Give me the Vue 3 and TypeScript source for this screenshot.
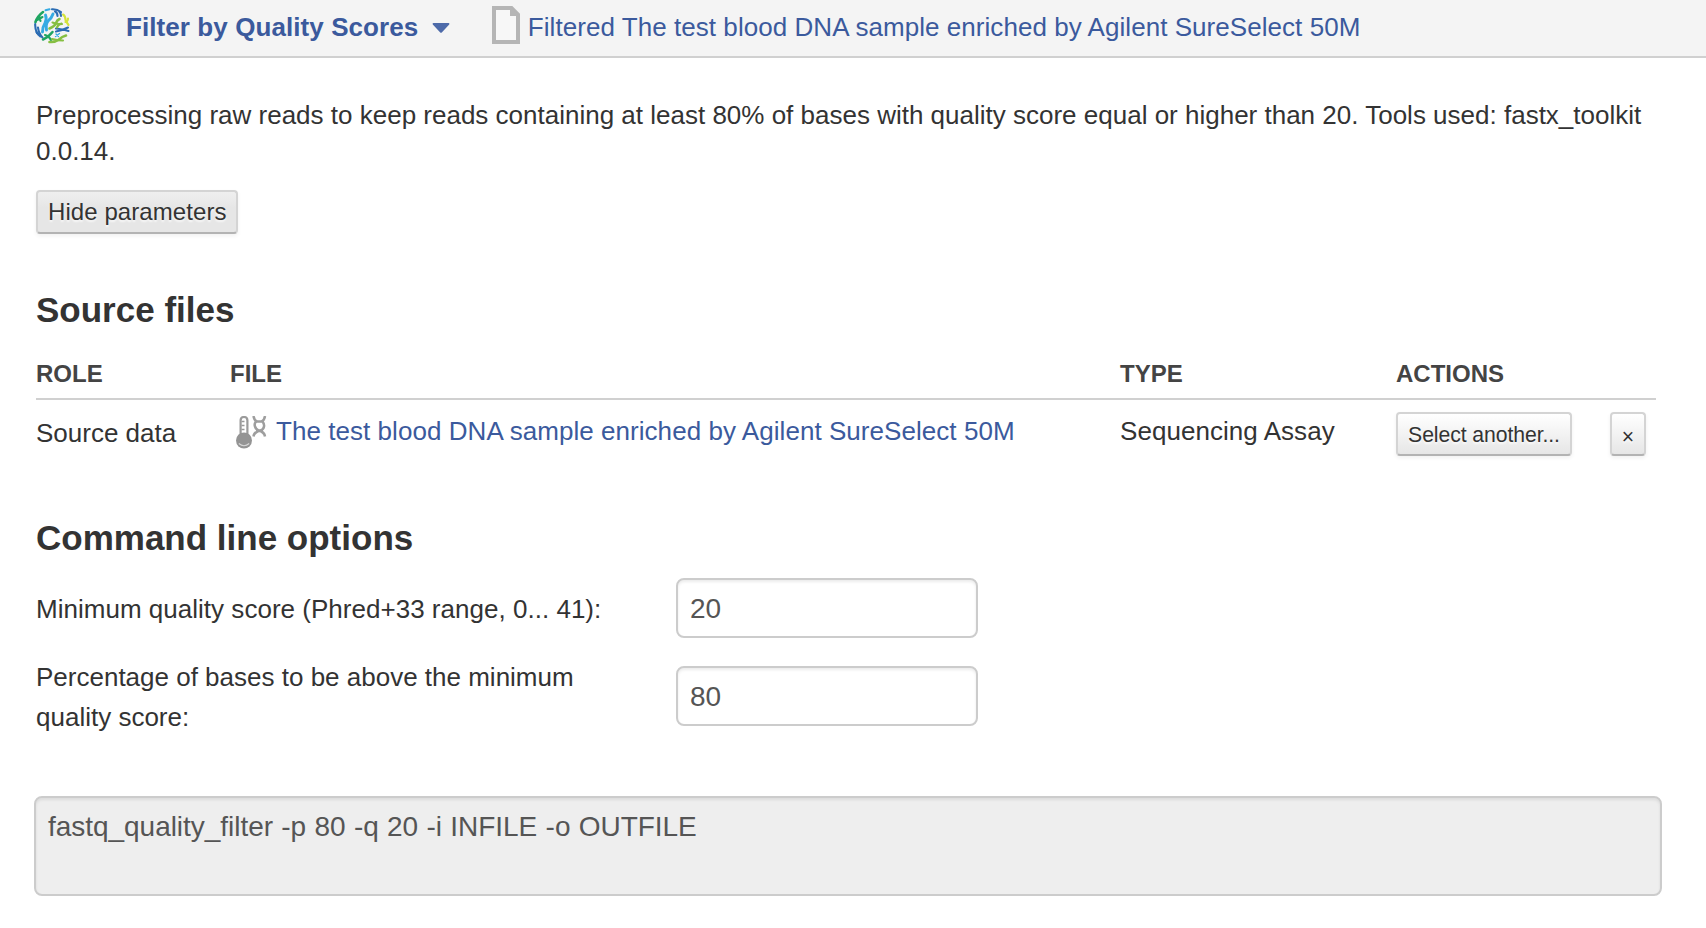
<script setup lang="ts">
import { computed, ref } from 'vue'

interface SourceFile {
  role: string
  name: string
  type: string
}

const files: SourceFile[] = [
  {
    role: 'Source data',
    name: 'The test blood DNA sample enriched by Agilent SureSelect 50M',
    type: 'Sequencing Assay',
  },
]

const minScore = ref('20')
const percentage = ref('80')
const command = computed(
  () => `fastq_quality_filter -p ${percentage.value} -q ${minScore.value} -i INFILE -o OUTFILE`,
)
</script>

<template>
  <div class="page">
    <header class="bar">
      <svg class="logo" viewBox="0 0 36 36" fill="none" stroke-linecap="round" stroke-width="2.1">
        <g stroke="#d3e33c">
          <path d="M29 6.500 Q31.500 8 31.500 12 Q33 15 34.500 17" />
          <path d="M34 10.500 Q34 13 31.500 14" />
        </g>
        <g stroke="#2b6cb3">
          <path d="M18 1.300 Q23 1 27 4" />
          <path d="M21 3.500 Q23.500 4.500 23.500 8 M25.500 4 Q27 5 27 8" />
          <path d="M1.200 16 Q1 21 3 25" />
          <path d="M4 19.500 Q4.500 25 8.500 29.500 M2.500 24 Q4 27 6.500 28.500" />
          <path d="M22 20.500 Q28 21 34.500 23 M22 23.500 Q28 22.500 34 19.500" />
        </g>
        <g stroke="#1fa561">
          <path d="M1.500 14 Q3.500 8 9 4" stroke-width="2.600" />
          <path d="M5.500 9 L6.500 13 M3 12 L8.500 9" />
          <path d="M9 31.500 Q14 29.500 18.500 24" stroke-width="2.500" />
          <path d="M11 27 Q15 28 17 32" />
        </g>
        <g stroke="#35abe3">
          <path d="M11.500 7 Q13 11 11 15 Q8.500 19 8.500 24" stroke-width="2.900" />
          <path d="M19 6 Q17.500 10.500 14 13 Q11.500 16 12.500 22" stroke-width="2.900" />
          <path d="M11.500 2.300 L15.500 1.300" />
          <path d="M21.500 28.500 L25.500 25.500 M22 26 L24.500 28.500" stroke-width="1.300" />
        </g>
        <g stroke="#86bf42">
          <path d="M15.500 20.500 Q20.500 18.500 22 15 Q23 12 25.500 11" stroke-width="2.600" />
          <path d="M18.500 14.500 Q23 16.500 28 16 M23 19.500 Q23.500 17 27.500 15.500" />
          <path d="M15.500 34 Q21 34.500 25 31.500 Q28 28.500 32 27.500" stroke-width="2.600" />
          <path d="M18 31 Q23 32.500 29 32.500" />
        </g>
      </svg>
      <a class="app-name">Filter by Quality Scores</a>
      <svg class="caret" viewBox="0 0 18 10"><path d="M1.500 0 H16.500 Q18 .5 17 1.700 L10 9.300 Q9 10.300 8 9.300 L1 1.700 Q0 .5 1.500 0Z" fill="#4d6aa9" /></svg>
      <svg class="doc" viewBox="0 0 28 38">
        <path d="M2 2 H19.500 L26 8.500 V36 H2 Z" fill="#f7f7f7" stroke="#b5b5b5" stroke-width="4" />
        <path d="M18 2 V10 H27 L20 2Z" fill="#b5b5b5" />
      </svg>
      <a class="file-name">Filtered The test blood DNA sample enriched by Agilent SureSelect 50M</a>
    </header>

    <main class="content">
      <p class="description">
        Preprocessing raw reads to keep reads containing at least 80% of bases with quality score
        equal or higher than 20. Tools used: fastx_toolkit 0.0.14.
      </p>
      <button class="btn pressed">Hide parameters</button>

      <h2 class="sources-title">Source files</h2>
      <section class="table">
        <div class="row head">
          <span>ROLE</span><span>FILE</span><span>TYPE</span><span>ACTIONS</span>
        </div>
        <div v-for="file in files" :key="file.name" class="row body">
          <span class="role">{{ file.role }}</span>
          <span class="file">
            <svg class="assay" viewBox="0 0 32 33">
              <path d="M4.600 19 V4.500 Q4.600 1 8 1 Q11.400 1 11.400 4.500 V19" fill="#fff" stroke="#9b9b9b" stroke-width="2.200" />
              <circle cx="8" cy="24.500" r="8" fill="#949494" />
              <path d="M2.800 27.500 Q8 32 13.200 27.500" fill="none" stroke="#d8d8d8" stroke-width="1.100" />
              <path d="M5.500 5.500 H8.500 M5.500 9.500 H8.500 M5.500 13.500 H8.500" stroke="#999" stroke-width="1.500" />
              <g fill="none" stroke="#9e9e9e" stroke-width="2.500">
                <path d="M17.500 0 Q18 4 21 5.500 M29 0 Q28.500 4 25.500 5.500" />
                <path d="M20 5.500 H26.500 Q28.500 8 28 10.500 Q27.500 13.500 24.500 14.500 Q18 16 17.500 20.500" />
                <path d="M20 5.500 Q18 8 19 10.500 Q20 13.500 22.500 14.500 Q28.500 16 29 20.500" />
                <path d="M20 14.700 H27" stroke-width="2" />
              </g>
            </svg>
            <a>{{ file.name }}</a>
          </span>
          <span class="type">{{ file.type }}</span>
          <span class="actions">
            <button class="btn small">Select another...</button>
            <button class="btn small remove">×</button>
          </span>
        </div>
      </section>

      <h2 class="options-title">Command line options</h2>
      <div class="option first">
        <label for="score">Minimum quality score (Phred+33 range, 0... 41):</label>
        <input id="score" v-model="minScore" type="text" />
      </div>
      <div class="option second">
        <label for="percent">Percentage of bases to be above the minimum quality score:</label>
        <input id="percent" v-model="percentage" type="text" />
      </div>
      <div class="command">{{ command }}</div>
    </main>
  </div>
</template>

<style>
body {
  margin: 0;
  background: #fff;
}
</style>

<style scoped>
.page {
  min-height: 928px;
  font: 26px/36px 'Liberation Sans', Arial, sans-serif;
  color: #333;
}
.page * {
  box-sizing: border-box;
}
a {
  color: #3b5a9d;
  letter-spacing: 0.05px;
  white-space: nowrap;
}
.bar {
  display: flex;
  align-items: center;
  height: 58px;
  padding: 0 0 2px 34px;
  background: #f4f4f4;
  border-bottom: 2px solid #d0d0d0;
}
.logo {
  width: 36px;
  height: 36px;
  margin-bottom: 2px;
}
.app-name {
  margin-left: 56px;
  font-weight: bold;
  letter-spacing: 0.08px;
}
.caret {
  width: 18px;
  height: 10px;
  margin: 2px 0 0 14px;
}
.doc {
  width: 28px;
  height: 38px;
  margin: 0 8px 4px 41.5px;
}
.content {
  padding: 39px 44px 0 36px;
}
.description {
  margin: 0 0 21px;
}
.btn {
  display: block;
  height: 44px;
  padding: 0 10px;
  font: 24px/40px 'Liberation Sans', Arial, sans-serif;
  color: #333;
  text-shadow: 0 2px 2px rgba(255, 255, 255, 0.75);
  white-space: nowrap;
  background: linear-gradient(#fff, #e6e6e6);
  border: 2px solid #d4d4d4;
  border-bottom-color: #b3b3b3;
  border-radius: 4px;
  box-shadow: 0 2px 4px rgba(0, 0, 0, 0.06);
}
.btn.pressed {
  width: 202px;
  letter-spacing: 0.08px;
  text-align: left;
  background: linear-gradient(#efefef, #e6e6e6 40%);
}
h2 {
  font-size: 35px;
  line-height: 40px;
  font-weight: bold;
}
.sources-title {
  margin: 56px 0 26px;
}
.row {
  display: grid;
  grid-template-columns: 194px 890px 276px 1fr;
  width: 1620px;
}
.head {
  height: 44px;
  font-size: 24px;
  font-weight: bold;
  color: #444;
  border-bottom: 2px solid #d0d0d0;
}
.body {
  height: 56px;
  padding-top: 12px;
}
.role {
  padding-top: 3px;
}
.file {
  display: flex;
  align-items: flex-start;
  padding: 1px 0 0 6px;
}
.assay {
  width: 32px;
  height: 33px;
  margin: 3px 8px 0 0;
}
.type {
  padding-top: 1px;
  letter-spacing: 0.05px;
}
.actions {
  display: flex;
  justify-content: space-between;
  padding-right: 10px;
}
.btn.small {
  width: 176px;
  padding: 1px 0 0;
  font-size: 21.2px;
  letter-spacing: -0.08px;
}
.btn.small.remove {
  width: 36px;
  padding-top: 3px;
}
.options-title {
  margin: 62px 0 20px;
}
.option {
  display: grid;
  grid-template-columns: 640px 302px;
  align-items: start;
}
.option label {
  width: 560px;
  line-height: 40px;
}
.first label {
  width: auto;
  margin-top: 11px;
  letter-spacing: 0.02px;
}
.second {
  margin-top: 19px;
}
.second input {
  margin-top: 9px;
}
input {
  width: 302px;
  height: 60px;
  padding: 1px 12px 0;
  font: 28px/36px 'Liberation Sans', Arial, sans-serif;
  color: #555;
  background: #fff;
  border: 2px solid #ccc;
  border-radius: 8px;
  box-shadow: inset 0 2px 3px rgba(0, 0, 0, 0.08);
  outline: none;
}
.command {
  width: 1628px;
  height: 100px;
  margin: 59px 0 0 -2px;
  padding: 11px 12px;
  font-size: 28px;
  letter-spacing: -0.035px;
  word-spacing: 0.6px;
  color: #555;
  background: #eee;
  border: 2px solid #ccc;
  border-radius: 8px;
  box-shadow: inset 0 2px 3px rgba(0, 0, 0, 0.08);
}
</style>
